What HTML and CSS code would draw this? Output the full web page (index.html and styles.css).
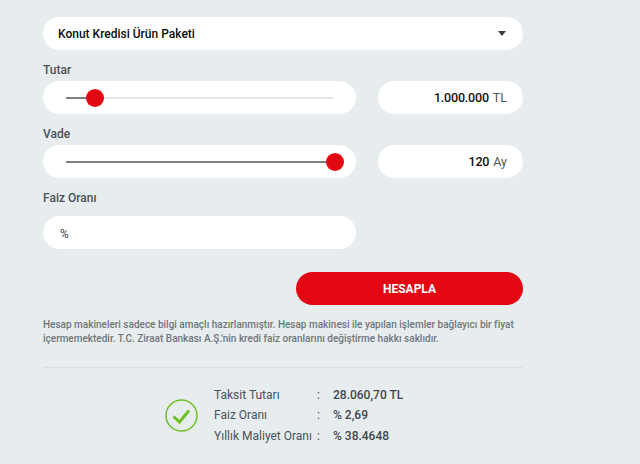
FILE: index.html
```html
<!DOCTYPE html>
<html lang="tr">
<head>
<meta charset="utf-8">
<title>Hesaplama</title>
<link rel="stylesheet" href="styles.css">
</head>
<body>
<main class="calc">
  <div class="pill select">
    <span>Konut Kredisi Ürün Paketi</span>
    <i class="caret"></i>
  </div>

  <div class="label label-tutar">Tutar</div>
  <div class="row">
    <div class="pill slider">
      <div class="track">
        <div class="fill fill-low"></div>
        <div class="thumb"></div>
      </div>
    </div>
    <div class="pill value"><b>1.000.000</b><span>TL</span></div>
  </div>

  <div class="label label-vade">Vade</div>
  <div class="row">
    <div class="pill slider">
      <div class="track">
        <div class="fill fill-full"></div>
        <div class="thumb"></div>
      </div>
    </div>
    <div class="pill value"><b>120</b><span>Ay</span></div>
  </div>

  <div class="label label-faiz">Faiz Oranı</div>
  <div class="pill rate">%</div>

  <div class="actions"><button class="btn" type="button">HESAPLA</button></div>

  <p class="note">Hesap makineleri sadece bilgi amaçlı hazırlanmıştır. Hesap makinesi ile yapılan işlemler bağlayıcı bir fiyat içermemektedir. T.C. Ziraat Bankası A.Ş.'nin kredi faiz oranlarını değiştirme hakkı saklıdır.</p>

  <hr class="rule">

  <section class="result">
    <svg class="check" width="33" height="33" viewBox="0 0 33 33" aria-hidden="true">
      <circle cx="16.5" cy="16.5" r="15.5" fill="none" stroke="#70bf26" stroke-width="1.5"/>
      <path d="M8.5 17.5l6 5.5L24 11.5" fill="none" stroke="#70bf26" stroke-width="3"/>
    </svg>
    <dl class="list">
      <dt>Taksit Tutarı</dt><dd class="colon">:</dd><dd class="num">28.060,70 TL</dd>
      <dt>Faiz Oranı</dt><dd class="colon">:</dd><dd class="num">% 2,69</dd>
      <dt>Yıllık Maliyet Oranı</dt><dd class="colon">:</dd><dd class="num">% 38.4648</dd>
    </dl>
  </section>
</main>
</body>
</html>
```
FILE: styles.css
```css
* { box-sizing: border-box; }
html, body { margin: 0; height: 100%; }
body {
  background: #e7ecef;
  font-family: "Roboto", "Open Sans", sans-serif;
  color: #3f474d;
  overflow: hidden;
}
.calc { width: 480px; margin-left: 43px; padding-top: 17px; }
.pill { background: #fff; height: 33px; border-radius: 17px; display: flex; align-items: center; }
.select {
  justify-content: space-between;
  padding: 0 17px 0 15px;
  font-size: 12px;
  font-weight: 500;
  color: #0c0c0c;
}
.caret { width: 0; height: 0; border-left: 4.5px solid transparent; border-right: 4.5px solid transparent; border-top: 5px solid #3c4045; }
.label { font-size: 12px; font-weight: 500; color: #4a5258; line-height: 16px; }
.label-tutar { margin-top: 12px; margin-bottom: 3px; }
.label-vade { margin-top: 12px; margin-bottom: 3px; }
.label-faiz { margin-top: 12px; margin-bottom: 10px; }
.row { display: flex; justify-content: space-between; }
.slider { width: 313px; padding: 0 23px 0 23px; }
.track { flex: 1; height: 2px; background: #e3e7ec; position: relative; }
.fill { height: 2px; background: #808080; }
.fill-low { width: 29px; }
.fill-full { width: 100%; }
.thumb {
  position: absolute; top: -8px; width: 18px; height: 18px;
  border-radius: 50%; background: #e30613;
}
.fill-low + .thumb { left: 20px; }
.fill-full + .thumb { right: -11px; }
.value { width: 145px; justify-content: flex-end; padding-right: 16px; font-size: 12.5px; }
.value b { color: #111; font-weight: 500; letter-spacing: -0.2px; }
.value span { margin-left: 4px; color: #4f5559; }
.rate { width: 313px; padding: 3px 0 0 17px; font-size: 12px; font-weight: 500; color: #555b60; }
.actions { display: flex; justify-content: flex-end; margin-top: 23px; }
.btn {
  width: 227px; height: 33px; border: 0; border-radius: 17px;
  background: #e30613; color: #fff;
  font: 700 12px "Roboto", sans-serif;
}
.note { margin: 13px 0 0; font-size: 10px; font-weight: 500; line-height: 14px; color: #6f767b; }
.rule { margin: 21px 0 0; border: 0; border-top: 1px solid #d9dee2; }
.result { display: flex; align-items: center; margin-left: 122px; margin-top: 16.5px; }
.check { flex: none; }
.list {
  margin: 0 0 0 16px;
  display: grid;
  grid-template-columns: 103px 16px auto;
  grid-auto-rows: 20.5px;
  font-size: 12px;
  align-items: center;
}
.list dt { color: #4a5258; white-space: nowrap; }
.list dd { margin: 0; }
.num { font-weight: 500; color: #3f474d; }
```
